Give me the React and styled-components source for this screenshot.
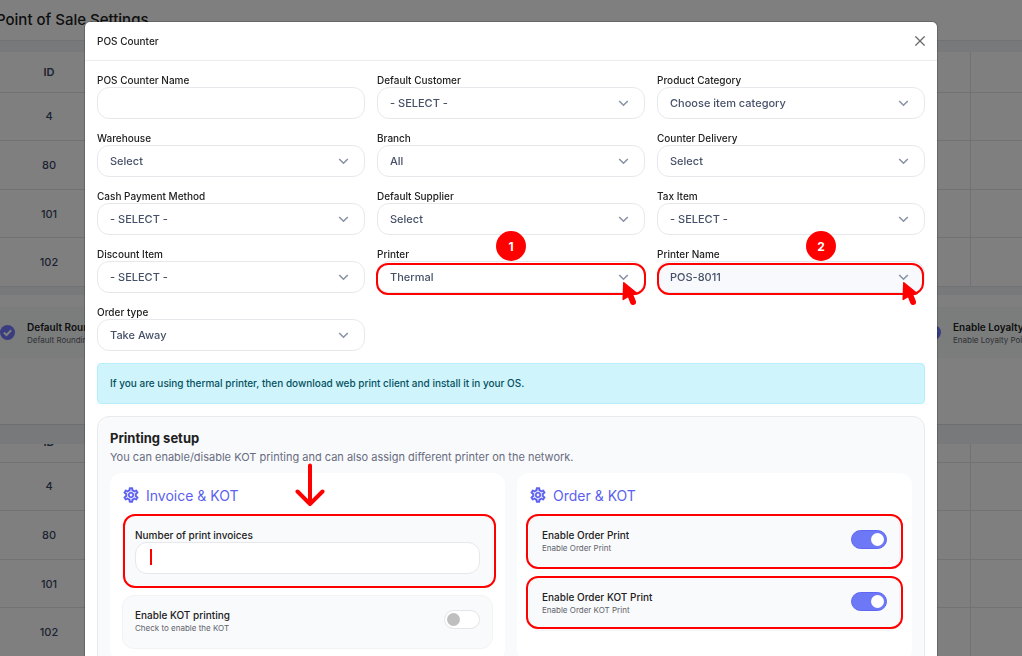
import React from "react";
import styled, {createGlobalStyle, css} from "styled-components";
import {MdOutlineSettings} from "react-icons/md";

const GlobalStyle = createGlobalStyle`
  * {
    box-sizing: border-box;
  }

  body {
    margin: 0;
    font-family: Inter, "Liberation Sans", sans-serif;
    font-size: 11px;
    font-weight: 500;
    color: #212121;
  }
`;

const Page = styled.div`
  height: 100vh;
  overflow: hidden;
  background: #eef2f6;
`;

const TopBar = styled.header`
  height: 41px;
  display: flex;
  align-items: center;
  background: #fff;
  border-bottom: 1px solid #e3e5e8;
`;

const PageTitle = styled.h1`
  margin: 0 0 2px;
  font-size: 15px;
  font-weight: 500;
  text-indent: -4px;
`;

const TableCard = styled.section`
  margin-top: ${(props) => props.$gap}px;
  overflow: hidden;
  background: #fff;
`;

const Table = styled.table`
  width: 100%;
  height: 235px;
  margin-top: ${(props) => (props.$scrolled ? "-22px" : "0")};
  table-layout: fixed;
  border-collapse: collapse;
  color: #3a4664;

  th, td {
    padding: 0;
    text-align: center;
    border-bottom: 1px solid #e3e5e8;
  }

  th {
    height: 40px;
    font-weight: 600;
  }

  th:first-child {
    width: 98px;
  }

  th:last-child {
    width: 52px;
  }

  th:last-child, td:last-child {
    border-left: 1px solid #e3e5e8;
  }
`;

const OptionsCard = styled.section`
  height: 130px;
  margin-top: 8px;
  padding-top: 12px;
  background: #fff;
  border-bottom: 1px solid #dcdee2;
`;

const OptionsBar = styled.div`
  height: 51px;
  display: grid;
  grid-template-columns: 1fr 96px;
  align-items: center;
  background: #f6fafa;
`;

const Option = styled.div`
  display: flex;
  align-items: center;
  gap: 12px;
  overflow: hidden;
  white-space: nowrap;

  svg {
    flex: none;
  }
`;

const Overlay = styled.div`
  position: fixed;
  inset: 0;
  padding: 22px 16px;
  overflow: hidden;
  background: rgba(0, 0, 0, 0.5);
`;

const Modal = styled.div`
  max-width: 852px;
  margin: 0 auto;
  background: #fff;
  border-radius: 5px;
  box-shadow: 0 0 0 1px rgba(0, 0, 0, 0.2);
`;

const ModalHeader = styled.div`
  height: 39px;
  padding: 0 12px;
  display: flex;
  align-items: center;
  justify-content: space-between;
  border-bottom: 1px solid #ececee;
`;

const ModalTitle = styled.h2`
  margin: 0;
  font-size: 10px;
  font-weight: 500;
`;

const CloseButton = styled.button`
  display: flex;
  padding: 0;
  border: none;
  background: none;
  cursor: pointer;
`;

const ModalBody = styled.div`
  padding: 12px;
  display: flex;
  flex-direction: column;
  gap: 12px;
`;

const FieldGrid = styled.div`
  display: grid;
  grid-template-columns: repeat(3, 1fr);
  gap: 12px;
`;

const FieldBox = styled.div`
  position: relative;
`;

const Label = styled.label`
  display: block;
  font-size: 10px;
  line-height: 14px;
`;

const OptionTitle = styled.div`
  font-size: 10px;
  font-weight: 600;
  line-height: 14px;
`;

const Control = styled.div`
  position: relative;
`;

const boxStyle = css`
  display: block;
  width: 100%;
  height: 32px;
  padding: 0 12px;
  border: 1px solid #e6e8ec;
  border-radius: 12px;
  background: ${(props) => (props.$muted ? "#f8f9fc" : "#fff")};
  color: #465168;
  font: inherit;
`;

const TextInput = styled.input`
  ${boxStyle}
`;

const Select = styled.select`
  ${boxStyle}
  appearance: none;
`;

const Chevron = styled.svg`
  position: absolute;
  top: 13px;
  right: 16px;
  pointer-events: none;
`;

const Highlight = styled.div`
  position: absolute;
  inset: ${(props) => props.$inset};
  border: 2px solid #ff0000;
  border-radius: 12px;
  pointer-events: none;
`;

const Badge = styled.span`
  position: absolute;
  top: -16px;
  left: calc(50% + ${(props) => props.$shift}px);
  width: 30px;
  height: 30px;
  margin-left: -15px;
  display: flex;
  align-items: center;
  justify-content: center;
  border-radius: 50%;
  background: #ff0000;
  color: #fff;
  font-size: 12px;
  font-weight: 700;
`;

const Pointer = styled.svg`
  position: absolute;
  top: 20px;
  right: 7px;
  pointer-events: none;
`;

const Caret = styled.span`
  position: absolute;
  top: 7px;
  left: 15px;
  width: 2px;
  height: 16px;
  background: #ff0000;
`;

const Notice = styled.div`
  padding: 12px;
  line-height: 15px;
  font-size: 10px;
  border: 1px solid #b6effb;
  border-radius: 4px;
  background: #cff4fc;
  color: #055160;
`;

const Setup = styled.section`
  padding: 12px;
  border: 1px solid #e8eaed;
  border-radius: 12px;
  background: #f9fafc;
`;

const SetupTitle = styled.h3`
  margin: 0;
  font-size: 13px;
  font-weight: 700;
  line-height: 18px;
`;

const SetupText = styled.p`
  margin: 2px 0 8px;
  color: #686c80;
  font-weight: 400;
  line-height: 16px;
`;

const Cards = styled.div`
  display: grid;
  grid-template-columns: repeat(2, 1fr);
  gap: 12px;
`;

const Card = styled.div`
  position: relative;
  padding: 12px;
  display: flex;
  flex-direction: column;
  gap: 8px;
  border-radius: 12px;
  background: #fff;
`;

const CardTitle = styled.h4`
  margin: 0 0 2px;
  height: 20px;
  display: flex;
  align-items: center;
  gap: 6px;
  color: #5b5ff0;
  font-size: 14px;
  font-weight: 400;

  path:last-child {
    stroke-width: 0.6px;
  }
`;

const Tile = styled.div`
  position: relative;
  padding: 12px;
  border: 1px solid #f1f3f5;
  border-radius: 12px;
  background: #f9fafc;
`;

const SwitchTile = styled(Tile)`
  height: 54px;
  display: flex;
  align-items: flex-start;
  justify-content: space-between;
`;

const Hint = styled.small`
  display: block;
  color: #5f636b;
  font-size: 8px;
  font-weight: 400;
  line-height: 12px;
`;

const Switch = styled.input`
  appearance: none;
  width: 36px;
  height: 19px;
  margin: 2px 0 0;
  padding: 2px;
  border: 1px solid #e3e5e8;
  border-radius: 10px;
  background: #fff;

  &::before {
    content: "";
    display: block;
    width: 13px;
    height: 13px;
    border-radius: 50%;
    background: #bfbfbf;
  }

  &:checked {
    border-color: #5f67f2;
    background: #6d78f7;
  }

  &:checked::before {
    margin-left: auto;
    background: #fff;
  }
`;

const DownArrow = styled.svg`
  position: absolute;
  top: -10px;
  left: 185px;
`;

const ids = [4, 80, 101, 102];

const fields = [
    {id: "name", label: "POS Counter Name"},
    {id: "customer", label: "Default Customer", value: "- SELECT -"},
    {id: "category", label: "Product Category", value: "Choose item category"},
    {id: "warehouse", label: "Warehouse", value: "Select"},
    {id: "branch", label: "Branch", value: "All"},
    {id: "delivery", label: "Counter Delivery", value: "Select"},
    {id: "cash", label: "Cash Payment Method", value: "- SELECT -"},
    {id: "supplier", label: "Default Supplier", value: "Select"},
    {id: "tax", label: "Tax Item", value: "- SELECT -"},
    {id: "discount", label: "Discount Item", value: "- SELECT -"},
    {id: "printer", label: "Printer", value: "Thermal", step: 1, shift: 0, inset: "2px -1px -2px"},
    {id: "printerName", label: "Printer Name", value: "POS-8011", step: 2, shift: 30, inset: "2px 1px -2px 0", muted: true},
    {id: "orderType", label: "Order type", value: "Take Away"},
];

const CounterTable = ({gap, scrolled}) => (
    <TableCard $gap={gap}>
        <Table $scrolled={scrolled}>
            <thead>
                <tr><th>ID</th><th/><th/></tr>
            </thead>
            <tbody>
                {ids.map((id) => (
                    <tr key={id}><td>{id}</td><td/><td/></tr>
                ))}
            </tbody>
        </Table>
    </TableCard>
);

const CheckedOption = ({title}) => (
    <Option>
        <svg width="15" height="15" viewBox="0 0 15 15" fill="none">
            <circle cx="7.5" cy="7.5" r="7.5" fill="#7278ff"/>
            <path d="M3.8 7.6 6.5 10 11.2 5.2" stroke="#fff" strokeWidth="2"/>
        </svg>
        <div>
            <OptionTitle>{title}</OptionTitle>
            <Hint>{title}</Hint>
        </div>
    </Option>
);

const Field = ({field}) => (
    <FieldBox>
        <Label htmlFor={field.id}>{field.label}</Label>
        <Control>
            {field.value ? (
                <>
                    <Select id={field.id} $muted={field.muted}>
                        <option>{field.value}</option>
                    </Select>
                    <Chevron width="11" height="7" viewBox="0 0 11 7" fill="none" stroke="#8a93a5" strokeWidth="1.6">
                        <path d="M1.2 1 5.5 5.2 9.8 1"/>
                    </Chevron>
                </>
            ) : (
                <TextInput id={field.id} type="text"/>
            )}
            {field.step && (
                <>
                    <Highlight $inset={field.inset}/>
                    <Pointer width="16" height="25" viewBox="0 0 16 25" fill="#ff0000" stroke="#ff0000" strokeLinejoin="round">
                        <path d="M1.8 1.8 15 12.6 10 13.8 5.5 15.8 1.2 18.4Z" strokeWidth="1.5"/>
                        <path d="M7.5 12 11 21" strokeWidth="6" strokeLinecap="round"/>
                    </Pointer>
                </>
            )}
        </Control>
        {field.step && <Badge $shift={field.shift}>{field.step}</Badge>}
    </FieldBox>
);

const SwitchRow = ({id, title, hint, on, inset}) => (
    <SwitchTile>
        <div>
            <Label htmlFor={id}>{title}</Label>
            <Hint>{hint}</Hint>
        </div>
        <Switch id={id} type="checkbox" defaultChecked={on}/>
        {inset && <Highlight $inset={inset}/>}
    </SwitchTile>
);

const App = () => {
    return (
        <>
            <GlobalStyle/>
            <Page>
                <TopBar>
                    <PageTitle>Point of Sale Settings</PageTitle>
                </TopBar>
                <CounterTable gap={11}/>
                <OptionsCard>
                    <OptionsBar>
                        <CheckedOption title="Default Rounding"/>
                        <CheckedOption title="Enable Loyalty Points"/>
                    </OptionsBar>
                </OptionsCard>
                <CounterTable gap={19} scrolled/>
            </Page>
            <Overlay>
                <Modal role="dialog" aria-labelledby="modalTitle">
                    <ModalHeader>
                        <ModalTitle id="modalTitle">POS Counter</ModalTitle>
                        <CloseButton type="button" aria-label="Close">
                            <svg width="10" height="10" viewBox="0 0 10 10" stroke="#6a6a6a" strokeWidth="1.3">
                                <path d="M0.4 0.4 9.6 9.6M9.6 0.4 0.4 9.6"/>
                            </svg>
                        </CloseButton>
                    </ModalHeader>
                    <ModalBody>
                        <FieldGrid>
                            {fields.map((field) => (
                                <Field key={field.id} field={field}/>
                            ))}
                        </FieldGrid>
                        <Notice>
                            If you are using thermal printer, then download web print client and install it in your OS.
                        </Notice>
                        <Setup>
                            <SetupTitle>Printing setup</SetupTitle>
                            <SetupText>
                                You can enable/disable KOT printing and can also assign different printer on the network.
                            </SetupText>
                            <Cards>
                                <Card>
                                    <CardTitle><MdOutlineSettings size={18}/>Invoice &amp; KOT</CardTitle>
                                    <Tile>
                                        <Label htmlFor="invoices">Number of print invoices</Label>
                                        <Control>
                                            <TextInput id="invoices" type="text"/>
                                            <Caret/>
                                        </Control>
                                        <Highlight $inset="-2px -4px -2px 0"/>
                                    </Tile>
                                    <SwitchRow id="kot" title="Enable KOT printing" hint="Check to enable the KOT"/>
                                    <DownArrow width="30" height="44" viewBox="0 0 30 44" fill="none" stroke="#ff0000" strokeWidth="4" strokeLinecap="round" strokeLinejoin="round">
                                        <path d="M15 2.5V41M2.5 28.5 15 41 27.5 28.5"/>
                                    </DownArrow>
                                </Card>
                                <Card>
                                    <CardTitle><MdOutlineSettings size={18}/>Order &amp; KOT</CardTitle>
                                    <SwitchRow id="order" title="Enable Order Print" hint="Enable Order Print" on inset="-2px -4px -1px"/>
                                    <SwitchRow id="orderKot" title="Enable Order KOT Print" hint="Enable Order KOT Print" on inset="-2px -4px 1px"/>
                                </Card>
                            </Cards>
                        </Setup>
                    </ModalBody>
                </Modal>
            </Overlay>
        </>
    );
};

export default App;
